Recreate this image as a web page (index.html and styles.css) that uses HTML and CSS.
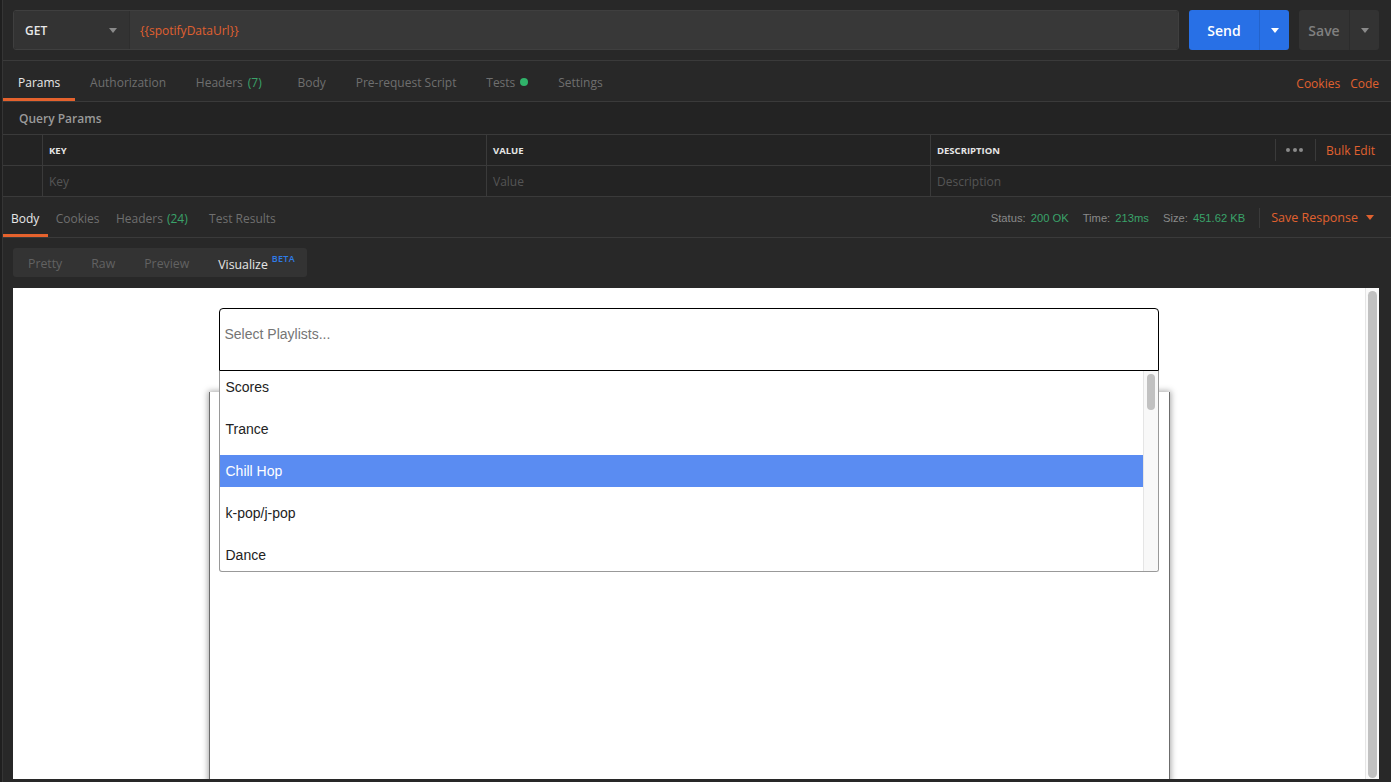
FILE: index.html
```html
<!DOCTYPE html>
<html>
<head>
<meta charset="utf-8">
<link rel="stylesheet" href="styles.css">
</head>
<body>
<div class="app">
  <div class="gutter"></div>
  <main class="main">
    <div class="urlbar">
      <div class="urlgroup">
        <div class="method"><span>GET</span><span class="caret caret-grey"></span></div>
        <div class="url">{{spotifyDataUrl}}</div>
      </div>
      <div class="send"><span class="send-label">Send</span><span class="send-drop"><span class="caret caret-white"></span></span></div>
      <div class="save"><span class="save-label">Save</span><span class="save-drop"><span class="caret caret-grey"></span></span></div>
    </div>

    <div class="reqtabs">
      <div class="tabs">
        <span class="tab active">Params</span>
        <span class="tab">Authorization</span>
        <span class="tab">Headers <span class="count">(7)</span></span>
        <span class="tab">Body</span>
        <span class="tab">Pre-request Script</span>
        <span class="tab">Tests <span class="dot"></span></span>
        <span class="tab">Settings</span>
      </div>
      <div class="links"><span>Cookies</span><span>Code</span></div>
    </div>

    <div class="params">
      <div class="qp-title">Query Params</div>
      <div class="ptable">
        <div class="prow phead">
          <div class="pc c0"></div>
          <div class="pc ck">KEY</div>
          <div class="pc cv">VALUE</div>
          <div class="pc cd"><span>DESCRIPTION</span>
            <div class="pactions"><span class="dots"><i></i><i></i><i></i></span><span class="bulk">Bulk Edit</span></div>
          </div>
        </div>
        <div class="prow pdata">
          <div class="pc c0"></div>
          <div class="pc ck ph">Key</div>
          <div class="pc cv ph">Value</div>
          <div class="pc cd ph">Description</div>
        </div>
      </div>
    </div>

    <div class="restabs">
      <div class="tabs rtabs">
        <span class="rtab active">Body</span>
        <span class="rtab">Cookies</span>
        <span class="rtab">Headers <span class="count">(24)</span></span>
        <span class="rtab">Test Results</span>
      </div>
      <div class="meta">
        <span class="mi">Status: <b>200 OK</b></span>
        <span class="mi">Time: <b>213ms</b></span>
        <span class="mi">Size: <b>451.62 KB</b></span>
        <span class="saveresp">Save Response <span class="caret caret-orange"></span></span>
      </div>
    </div>

    <div class="viewbar">
      <div class="toggle">
        <span class="tg">Pretty</span>
        <span class="tg">Raw</span>
        <span class="tg">Preview</span>
        <span class="tg on">Visualize<sup>BETA</sup></span>
      </div>
    </div>

    <div class="viewer">
      <div class="canvas">
        <div class="wrap">
          <div class="select">
            <div class="placeholder">Select Playlists...</div>
            <div class="menu">
              <div class="opts">
                <div class="opt">Scores</div>
                <div class="opt">Trance</div>
                <div class="opt hl">Chill Hop</div>
                <div class="opt">k-pop/j-pop</div>
                <div class="opt">Dance</div>
              </div>
              <div class="mscroll"><div class="mthumb"></div></div>
            </div>
          </div>
          <div class="card"></div>
        </div>
      </div>
      <div class="vscroll"><div class="vthumb"></div></div>
    </div>
  </main>
</div>
</body>
</html>
```

FILE: styles.css
```css
* { box-sizing: border-box; }
html, body { margin: 0; padding: 0; height: 100%; overflow: hidden; }
body { background: #282828; font-family: "Open Sans", "Liberation Sans", sans-serif; color: #808080; }

.app { display: flex; height: 782px; }
.gutter { width: 2px; background: #1f1f1f; }
.main { flex: 1; display: flex; flex-direction: column; border-left: 1px solid #353535; min-width: 0; }

/* URL bar */
.urlbar { height: 61px; display: flex; align-items: flex-start; padding: 10px 12px 0 10px; gap: 10px; border-bottom: 1px solid #3a3a3a; }
.urlgroup { flex: 1; display: flex; height: 40px; border-radius: 3px; overflow: hidden; border: 1px solid #3f3f3f; }
.method { width: 116px; background: #333; display: flex; align-items: center; justify-content: space-between; padding: 0 12px 0 11px; color: #e8e8e8; font-size: 12px; font-weight: 600; border-right: 1px solid #2e2e2e; }
.url { flex: 1; background: #383838; color: #e06030; font-size: 12px; display: flex; align-items: center; padding-left: 10px; }
.caret { display: inline-block; width: 0; height: 0; border-left: 4px solid transparent; border-right: 4px solid transparent; border-top: 5px solid #999; }
.caret-grey { border-top-color: #8a8a8a; }
.caret-white { border-top-color: #fff; }
.caret-orange { border-top-color: #e0612f; margin-left: 8px; vertical-align: middle; }
.send { width: 100px; height: 40px; background: #2870e6; border-radius: 3px; display: flex; color: #fff; font-size: 14px; font-weight: 600; }
.send-label { flex: 1; display: flex; align-items: center; justify-content: center; }
.send-drop { width: 30px; display: flex; align-items: center; justify-content: center; border-left: 1px solid #2363cc; }
.save { width: 80px; height: 40px; background: #333; border-radius: 3px; display: flex; color: #808080; font-size: 14px; font-weight: 600; }
.save-label { flex: 1; display: flex; align-items: center; justify-content: center; }
.save-drop { width: 30px; display: flex; align-items: center; justify-content: center; border-left: 1px solid #2c2c2c; }

/* request tabs */
.reqtabs { height: 41px; display: flex; justify-content: space-between; align-items: stretch; border-bottom: 1px solid #3a3a3a; }
.tabs { display: flex; align-items: stretch; }
.tab { padding: 5px 14.8px 0 15px; font-size: 12px; color: #6f6f6f; display: flex; align-items: center; border-bottom: 3px solid transparent; }
.tab.active { color: #e8e8e8; border-bottom-color: #e5622d; }
.tab .count { color: #3aa36a; margin-left: 5px; margin-right: 6px; }
.rtab .count { color: #3aa36a; margin-left: 4px; margin-right: 5px; }
.dot { width: 8px; height: 8px; border-radius: 50%; background: #30b36a; display: inline-block; margin-left: 5px; }
.links { display: flex; align-items: center; gap: 10px; padding-right: 12px; padding-top: 5px; font-size: 12px; color: #e0612f; }

/* params */
.params { background: #232323; border-bottom: 1px solid #3a3a3a; }
.qp-title { height: 33px; display: flex; align-items: center; padding-left: 16px; font-size: 12px; font-weight: 600; color: #9a9a9a; border-bottom: 1px solid #3a3a3a; }
.prow { display: flex; height: 31px; }
.pdata { height: 30px; }
.phead { border-bottom: 1px solid #3a3a3a; }
.pc { display: flex; align-items: center; font-size: 12px; padding-left: 6px; border-right: 1px solid #3a3a3a; }
.c0 { width: 40px; }
.ck, .cv { width: 444px; }
.cd { flex: 1; border-right: none; justify-content: space-between; }
.phead .pc { font-size: 9.5px; font-weight: 700; color: #e6e6e6; }
.ph { color: #555; }
.pactions { display: flex; align-items: center; height: 22px; }
.dots { display: flex; gap: 2.5px; padding: 0 12px 0 10px; border-left: 1px solid #3a3a3a; height: 22px; align-items: center; border-right: 1px solid #3a3a3a; }
.dots i { width: 4px; height: 4px; border-radius: 50%; background: #8a8a8a; display: block; }
.phead .bulk { font-size: 12px; font-weight: 400; color: #e0612f; padding: 0 16px 0 10px; }

/* response tabs */
.restabs { height: 41px; display: flex; justify-content: space-between; border-bottom: 1px solid #3a3a3a; }
.rtab { padding: 5px 8.4px 0 8px; font-size: 12px; color: #6f6f6f; display: flex; align-items: center; border-bottom: 3px solid transparent; }
.rtab.active { color: #e8e8e8; border-bottom-color: #e5622d; }
.meta { display: flex; align-items: center; font-family: "Liberation Sans", Arial, sans-serif; font-size: 11.2px; color: #8a8a8a; padding-top: 1px; }
.mi { margin-right: 14px; }
.mi b { font-weight: 400; color: #3aa36a; margin-left: 2px; }
.saveresp { font-family: "Open Sans", sans-serif; font-size: 12.5px; color: #e0612f; padding: 0 17px 0 11px; border-left: 1px solid #3a3a3a; height: 20px; display: flex; align-items: center; }

/* view toggle */
.viewbar { padding: 10px 10px 11px 10px; }
.toggle { display: inline-flex; height: 29px; background: #333; border-radius: 3px; align-items: center; padding: 0 0 0 15px; }
.tg { font-size: 12.3px; color: #626262; margin-right: 29px; position: relative; top: 1px; }
.tg.on { color: #e6e6e6; margin-right: 12px; }
.tg sup { color: #2f7ce8; font-size: 9px; font-weight: 600; margin-left: 4px; position: relative; top: -2px; letter-spacing: 0.3px; }

/* viewer */
.viewer { flex: 1; margin: 0 12px 3px 10px; background: #fff; display: flex; min-height: 0; }
.canvas { flex: 1; padding-top: 20px; overflow: hidden; font-family: "Liberation Sans", Arial, sans-serif; }
.vscroll { width: 14px; background: #fafafa; border-left: 1px solid #e6e6e6; padding: 3px 2px 0 2px; }
.vthumb { height: 487px; background: #c1c1c1; border-radius: 5px; }

.wrap { width: 961px; margin: 0 auto; }
.select { position: relative; margin: 0 11px 0 10px; height: 63px; border: 1px solid #000; border-radius: 4px 4px 0 0; z-index: 2; background: #fff; }
.placeholder { padding: 17px 0 0 5px; font-size: 14px; color: #757575; }
.menu { position: absolute; left: -1px; right: -1px; top: 62px; height: 201px; border: 1px solid #999; border-top: none; border-radius: 0 0 3px 3px; background: #fff; display: flex; overflow: hidden; }
.opts { flex: 1; }
.opt { height: 32px; margin-bottom: 10px; padding-left: 6px; display: flex; align-items: center; font-size: 14px; color: #222; }
.opt.hl { background: #5a8cf2; color: #fff; }
.mscroll { width: 15px; background: #f8f8f8; border-left: 1px solid #e5e5e5; padding: 3px 3px 0 3px; }
.mthumb { height: 36px; background: #c1c1c1; border-radius: 4px; }
.card { margin-top: 21px; height: 400px; background: #fff; border-left: 1px solid #6c6c6c; border-right: 1px solid #6c6c6c; box-shadow: 0 0 6px 1px rgba(0,0,0,0.35); }
```
